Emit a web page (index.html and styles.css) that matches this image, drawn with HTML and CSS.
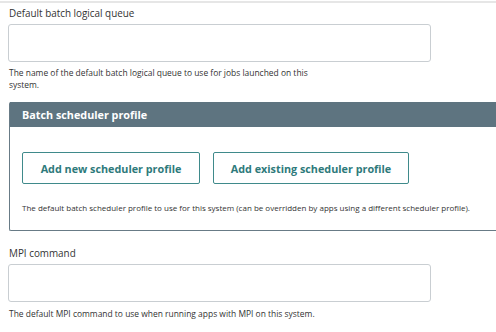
FILE: index.html
```html
<!DOCTYPE html>
<html lang="en">
<head>
    <meta charset="UTF-8">
    <title>System settings</title>
    <link rel="stylesheet" href="styles.css">
</head>
<body>
    <div class="form">
        <div class="field">
            <label class="field-label" for="queue">Default batch logical queue</label>
            <input class="field-input" id="queue" type="text">
            <p class="help-text narrow">The name of the default batch logical queue to use for jobs launched on this system.</p>
        </div>

        <div class="panel">
            <div class="panel-header">Batch scheduler profile</div>
            <div class="panel-body">
                <div class="btn-row">
                    <button class="btn-outline btn-new">Add new scheduler profile</button>
                    <button class="btn-outline btn-existing">Add existing scheduler profile</button>
                </div>
                <p class="panel-help">The default batch scheduler profile to use for this system (can be overridden by apps using a different scheduler profile).</p>
            </div>
        </div>

        <div class="field field-mpi">
            <label class="field-label" for="mpi">MPI command</label>
            <input class="field-input" id="mpi" type="text">
            <p class="help-text">The default MPI command to use when running apps with MPI on this system.</p>
        </div>
    </div>
</body>
</html>
```

FILE: styles.css
```css
* {
    margin: 0;
    padding: 0;
    box-sizing: border-box;
}

body {
    font-family: 'Open Sans', 'Liberation Sans', sans-serif;
    color: #333;
    background: #fff;
    padding-top: 1px;
    overflow: hidden;
}

.form {
    border-top: 2px solid #e6e6e6;
    padding-left: 8px;
    width: 520px;
}

.field {
    display: flex;
    flex-direction: column;
    align-items: flex-start;
}

.field-label {
    font-size: 9.9px;
    line-height: 14px;
    margin: 3px 0 0 1px;
    color: #333;
}

.field-input {
    width: 423px;
    height: 38px;
    margin-top: 4px;
    border: 1px solid #c9ced2;
    border-radius: 3px;
    background: #fff;
    outline: none;
}

.help-text {
    font-size: 8.45px;
    line-height: 12px;
    margin: 5px 0 0 1px;
    color: #333;
}

.help-text.narrow {
    width: 325px;
}

.panel {
    margin: 11px 0 0 1px;
    border-left: 1px solid #687b86;
    border-bottom: 1px solid #687b86;
    border-radius: 2px 0 0 2px;
}

.panel-header {
    background: #5e7480;
    color: #fff;
    font-weight: bold;
    font-size: 10.8px;
    height: 25px;
    line-height: 25px;
    padding-left: 12px;
}

.panel-body {
    padding: 25px 0 0 12px;
    height: 103px;
}

.btn-row {
    display: flex;
    gap: 13px;
}

.btn-outline {
    font-family: inherit;
    font-size: 10.8px;
    font-weight: bold;
    color: #2e7a7b;
    background: #fff;
    border: 1px solid #3f8a8b;
    border-radius: 2px;
    height: 32px;
    cursor: pointer;
}

.btn-new {
    width: 178px;
}

.btn-existing {
    width: 196px;
}

.panel-help {
    font-size: 8px;
    line-height: 12px;
    margin-top: 18px;
}

.field-mpi {
    margin-top: 12px;
}

.field-mpi .help-text {
    margin-top: 6px;
}
```
